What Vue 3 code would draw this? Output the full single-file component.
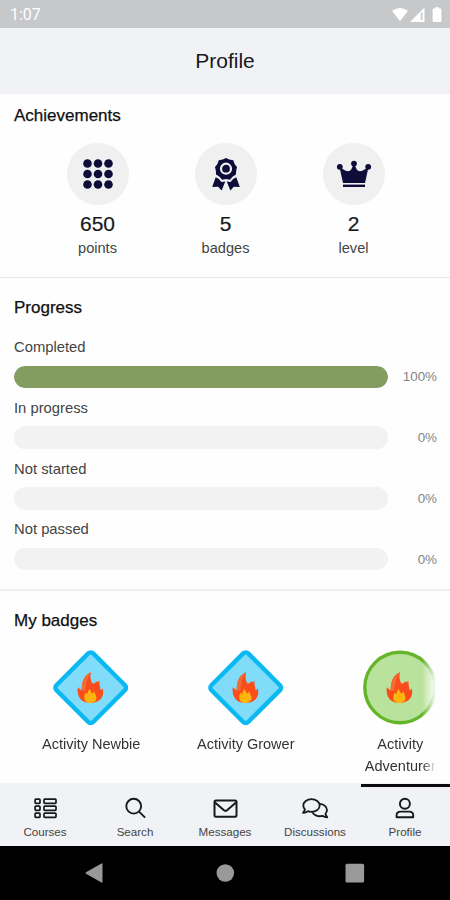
<template>
  <div class="screen">
    <div class="status-bar">
      <span class="time">1:07</span>
      <svg class="status-icons" width="52" height="18" viewBox="0 0 52 18" fill="#fff">
        <path d="M1 4.8Q9 -1 17 4.8L9 15.2Z" />
        <path d="M33.5 1.5V16H19Z" />
        <path d="M30.6 6.5V14" stroke="#c7c8ca" stroke-width="1.6" />
        <path d="M44 1.2h4v1.3h1.4q1 0 1 1V15q0 1-1 1h-6.8q-1 0-1-1V3.5q0-1 1-1H44Z" />
      </svg>
    </div>

    <header class="header">Profile</header>

    <section class="section achievements">
      <h2>Achievements</h2>
      <div class="stats">
        <div v-for="item in stats" :key="item.label" class="stat">
          <div class="stat-icon">
            <svg v-if="item.label === 'points'" width="30" height="30" viewBox="0 0 30 30" fill="#0e0c38">
              <template v-for="y in dots" :key="y">
                <circle v-for="x in dots" :key="x" :cx="x" :cy="y" r="4.3" />
              </template>
            </svg>
            <svg v-else-if="item.label === 'badges'" width="30" height="34" viewBox="0 0 30 34" fill="#0e0c38">
              <path
                d="M15 .9l3.3 1.7 3.9.7 1.4 3.7 2.4 3-.8 3.700-.3 3.900-3.400 2.100L18.900 22.700 15 22 11.100 22.700 8.500 19.700l-3.400-2.100-.3-3.900L4 10l2.400-3L7.800 3.300l3.900-.7Z"
              />
              <circle cx="15" cy="11.7" r="5" fill="none" stroke="#f0f0f0" stroke-width="2.2" />
              <path d="M4.700 20.300l3.200 1.700 2.500 2.900 3.900-.4-3.700 8.900-3.400-3.600-6 .1Z" />
              <path d="M25.300 20.300l-3.200 1.700-2.500 2.900-3.900-.4 3.700 8.900 3.400-3.600 6 .1Z" />
            </svg>
            <svg v-else width="36" height="30" viewBox="0 0 36 30" fill="#0e0c38">
              <path d="M3.5 8l5.6 3.5q4 1.8 6-.7L18 4.5l2.900 6.300q2 2.500 6 .7L32.500 8 29 24H7Z" />
              <circle cx="3.8" cy="7.8" r="2.9" />
              <circle cx="18" cy="4.6" r="2.9" />
              <circle cx="32.2" cy="7.8" r="2.9" />
              <rect x="7" y="25.600" width="22" height="2.400" />
            </svg>
          </div>
          <div class="stat-value">{{ item.value }}</div>
          <div class="stat-label">{{ item.label }}</div>
        </div>
      </div>
    </section>

    <section class="section progress">
      <h2>Progress</h2>
      <div v-for="row in progress" :key="row.label" class="progress-row">
        <div class="progress-label">{{ row.label }}</div>
        <div class="progress-line">
          <div class="track">
            <div class="fill" :style="{ width: row.percent + '%' }"></div>
          </div>
          <span class="percent">{{ row.percent }}%</span>
        </div>
      </div>
    </section>

    <section class="section badges">
      <h2>My badges</h2>
      <div class="badge-list">
        <div v-for="badge in badges" :key="badge.name" class="badge">
          <svg width="80" height="80" viewBox="0 0 80 80">
            <rect
              v-if="badge.shape === 'diamond'"
              x="13.7"
              y="13.7"
              width="52"
              height="52"
              rx="3.5"
              transform="rotate(45 39.7 39.7)"
              fill="#80dcf9"
              stroke="#0bb9f2"
              stroke-width="4.4"
            />
            <circle v-else cx="40" cy="39.5" r="35.2" fill="#b9e29d" stroke="#65b52a" stroke-width="3.4" />
            <path
              d="M40 24.2C38.8 29.5 39.8 32.5 41.5 35.5C43.8 35.7 44.7 34.5 45 33.3C46.4 34.3 47.3 34 48.6 32.8C48 36.5 49.3 38.5 49.6 42.3C50.6 41.8 51.2 41.2 51.7 40.3C54 48.5 49 55 39.3 55C30 55 25.5 48.5 26.8 39.3L30.6 42.5C31 34.5 32 28 40 24.2Z"
              fill="#fb4d1c"
            />
            <path
              d="M40 24.2C35.5 30 35 36 34.3 43L30.6 42.5C31 34.5 32 28 40 24.2Z"
              fill="#f46b33"
            />
            <path
              d="M39 41C39.3 43.5 40.5 44 41.3 45.7C42.3 45 42.8 44.2 43.6 43.5C43.5 46 45.9 48 45.5 50.5C45 53.6 42.5 55 39.3 55C35.5 55 33.2 53 33.3 49.5C33.3 47.8 34 46.4 34.2 44.8L36.3 46.3C36.6 44 37 42.3 39 41Z"
              fill="#ffb50d"
            />
          </svg>
          <div class="badge-name">{{ badge.name }}</div>
        </div>
      </div>
    </section>

    <nav class="tabs">
      <a v-for="tab in tabs" :key="tab" class="tab" :class="{ active: tab === 'Profile' }">
        <svg width="28" height="24" viewBox="0 0 28 24" fill="none" stroke="#17181c" stroke-width="1.7">
          <g v-if="tab === 'Courses'">
            <rect x="4.1" y="3.1" width="4.9" height="4.3" rx=".8" />
            <rect x="4.1" y="10.1" width="4.9" height="4.3" rx=".8" />
            <rect x="4.1" y="17.1" width="4.9" height="4.3" rx=".8" />
            <rect x="13" y="3.1" width="12" height="4.3" rx=".8" />
            <rect x="13" y="10.1" width="12" height="4.3" rx=".8" />
            <rect x="13" y="17.1" width="12" height="4.3" rx=".8" />
          </g>
          <g v-else-if="tab === 'Search'" stroke-width="1.9">
            <circle cx="12.7" cy="10.2" r="7.4" />
            <path d="M18.100 15.600L24.100 21.600" />
          </g>
          <g v-else-if="tab === 'Messages'" stroke-width="2">
            <rect x="3.5" y="4.5" width="22" height="16.2" rx="1.5" />
            <path d="M4 6.5L13 14.2Q14.5 15.4 16 14.2L25 6.5" />
          </g>
          <g v-else-if="tab === 'Discussions'" stroke-width="1.8" stroke-linejoin="round">
            <path d="M10.500 3.200C15 3.200 18.700 6 18.700 9.500S15 15.800 10.500 15.800C9.200 15.800 8 15.600 7 15.200C5.500 16.300 3.800 16.900 2 16.800C3 15.700 3.700 14.500 4 13.300C2.900 12.200 2.300 10.900 2.300 9.500C2.300 6 6 3.200 10.500 3.200Z" />
            <path d="M18.900 7.800C23 8.100 26 10.800 26 14C26 15.500 25.400 16.800 24.400 17.800C24.700 19.100 25.400 20.300 26.300 21.300C24.500 21.300 22.800 20.800 21.400 19.800C17.200 21.100 13 19.300 11.400 16.300" />
          </g>
          <g v-else stroke-width="1.9">
            <circle cx="13.9" cy="7.8" r="5" />
            <path d="M5.6 21.2V19.2Q5.6 15.6 9.6 15.6H18.2Q22.2 15.6 22.2 19.2V21.2Z" stroke-linejoin="round" />
          </g>
        </svg>
        <span>{{ tab }}</span>
      </a>
    </nav>

    <div class="system-nav">
      <svg width="22" height="22" viewBox="0 0 22 22" fill="#999">
        <path d="M17.5 1.5Q18.5 1 18.5 2.2V19.8Q18.5 21 17.5 20.5L2 11.7Q1 11 2 10.3Z" />
      </svg>
      <svg width="22" height="22" viewBox="0 0 22 22" fill="#999">
        <circle cx="11.3" cy="11" r="8.8" />
      </svg>
      <svg width="22" height="22" viewBox="0 0 22 22" fill="#999">
        <rect x="1.5" y="1.8" width="18.6" height="18.8" rx="1.5" />
      </svg>
    </div>
  </div>
</template>

<script setup>
const dots = [4.5, 15, 25.5];

const stats = [
  { value: 650, label: "points" },
  { value: 5, label: "badges" },
  { value: 2, label: "level" },
];

const progress = [
  { label: "Completed", percent: 100 },
  { label: "In progress", percent: 0 },
  { label: "Not started", percent: 0 },
  { label: "Not passed", percent: 0 },
];

const badges = [
  { name: "Activity Newbie", shape: "diamond" },
  { name: "Activity Grower", shape: "diamond" },
  { name: "Activity Adventurer", shape: "circle" },
];

const tabs = ["Courses", "Search", "Messages", "Discussions", "Profile"];
</script>

<style>
body {
  margin: 0;
  background: #fefefe;
}
</style>

<style scoped>
.screen {
  width: 450px;
  height: 900px;
  display: flex;
  flex-direction: column;
  overflow: hidden;
  background: #fefefe;
  color: #17181a;
  font-family: "Liberation Sans", Arial, sans-serif;
}

.status-bar {
  height: 28px;
  flex: none;
  box-sizing: border-box;
  padding: 1px 7px 0 10px;
  display: flex;
  justify-content: space-between;
  align-items: center;
  background: #c7c8ca;
  color: #fff;
}

.time {
  font-family: Roboto, sans-serif;
  font-size: 16px;
}

.header {
  height: 66px;
  flex: none;
  line-height: 65px;
  text-align: center;
  font-size: 21px;
  background: #f1f2f6;
}

.section {
  box-sizing: border-box;
  flex: none;
  padding: 0 14px;
}

h2 {
  margin: 0;
  font-size: 17px;
  font-weight: normal;
  line-height: 24px;
  color: #101010;
  -webkit-text-stroke: 0.25px #101010;
}

.achievements {
  height: 184px;
  padding-top: 10px;
  border-bottom: 1px solid #e8e8e8;
}

.stats {
  display: flex;
  justify-content: center;
  margin: 15px 0 0 1px;
}

.stat {
  width: 128px;
  display: flex;
  flex-direction: column;
  align-items: center;
}

.stat-icon {
  width: 62px;
  height: 62px;
  border-radius: 50%;
  background: #f0f0f0;
  display: flex;
  justify-content: center;
  align-items: center;
}

.stat-value {
  margin-top: 6px;
  font-size: 21px;
  line-height: 26px;
  -webkit-text-stroke: 0.2px #17181a;
}

.stat-label {
  margin-top: 1px;
  font-size: 14.6px;
  line-height: 20px;
  color: #444;
}

.progress {
  height: 313px;
  padding-top: 18px;
  border-bottom: 2px solid #efefef;
}

.progress h2 {
  margin-bottom: 17px;
}

.progress-row {
  height: 60.8px;
}

.progress-label {
  font-size: 14.8px;
  line-height: 20px;
  color: #444;
}

.progress-line {
  margin-top: 8.6px;
  display: flex;
  align-items: center;
  justify-content: space-between;
}

.track {
  width: 374px;
  height: 22.5px;
  border-radius: 12px;
  background: #f2f2f2;
  overflow: hidden;
}

.fill {
  height: 100%;
  border-radius: 12px;
  background: #839c60;
}

.percent {
  margin-right: -1px;
  font-size: 13.4px;
  color: #858585;
}

.badges {
  height: 192px;
  padding-top: 18px;
}

.badge-list {
  margin-top: 15px;
  display: flex;
  overflow: hidden;
  mask-image: linear-gradient(to right, #000 calc(100% - 14px), transparent);
}

.badge {
  flex: 0 0 154.5px;
  display: flex;
  flex-direction: column;
  align-items: center;
}

.badge-name {
  max-width: 110px;
  margin-top: 5px;
  text-align: center;
  font-size: 14.5px;
  line-height: 22px;
  color: #333;
}

.tabs {
  height: 63px;
  flex: none;
  display: flex;
  background: #f1f2f6;
}

.tab {
  position: relative;
  flex: 1;
  display: flex;
  flex-direction: column;
  align-items: center;
  padding-top: 13px;
  font-size: 11.6px;
  line-height: 14px;
  color: #444;
}

.tab span {
  margin-top: 5px;
}

.tab.active::before {
  content: "";
  position: absolute;
  top: 1px;
  left: 1px;
  right: 0;
  height: 3px;
  background: #0c0c10;
}

.system-nav {
  flex: 1;
  display: flex;
  justify-content: center;
  align-items: center;
  gap: 108px;
  background: #000;
}
</style>
